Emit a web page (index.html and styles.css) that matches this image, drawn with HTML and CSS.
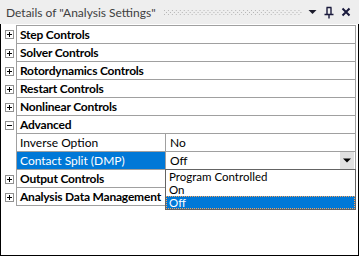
FILE: index.html
```html
<!DOCTYPE html>
<html>
<head>
<meta charset="utf-8">
<link rel="stylesheet" href="styles.css">
</head>
<body>
<div class="window">
  <div class="titlebar">
    <span class="title">Details of "Analysis Settings"</span>
    <svg class="grip" width="140" height="5" viewBox="0 0 140 5">
      <defs>
        <pattern id="dots" width="4" height="4" patternUnits="userSpaceOnUse">
          <rect x="0" y="0" width="1" height="1" fill="#b4b4b4"/>
          <rect x="2" y="2" width="1" height="1" fill="#b4b4b4"/>
        </pattern>
      </defs>
      <rect x="0" y="0" width="140" height="5" fill="url(#dots)"/>
    </svg>
    <span class="tbtns">
      <svg class="tbtn" width="9" height="6" viewBox="0 0 9 6"><polygon points="0.5,1 8.5,1 4.5,5" fill="#1c1c2c"/></svg>
      <svg class="tbtn" width="10" height="13" viewBox="0 0 10 13">
        <path d="M2.5 1.5 H7.5 M3 1.5 V8 M7 1.5 V8 M0.5 8.5 H9.5 M5 9 V12.5" stroke="#1a1a3c" stroke-width="1.4" fill="none"/>
      </svg>
      <svg class="tbtn" width="10" height="10" viewBox="0 0 10 10">
        <path d="M1.5 1.5 L8.5 8.5 M8.5 1.5 L1.5 8.5" stroke="#1a1a3c" stroke-width="2" fill="none"/>
      </svg>
    </span>
  </div>
  <div class="body">
    <div class="tree">
      <div class="row">
        <span class="exp"><svg width="9" height="9" viewBox="0 0 9 9"><rect x="0.5" y="0.5" width="8" height="8" fill="#fff" stroke="#909090"/><path d="M2 4.5 H7 M4.5 2 V7" stroke="#000"/></svg></span>
        <div class="cells cat">Step Controls</div>
      </div>
      <div class="row">
        <span class="exp"><svg width="9" height="9" viewBox="0 0 9 9"><rect x="0.5" y="0.5" width="8" height="8" fill="#fff" stroke="#909090"/><path d="M2 4.5 H7 M4.5 2 V7" stroke="#000"/></svg></span>
        <div class="cells cat">Solver Controls</div>
      </div>
      <div class="row">
        <span class="exp"><svg width="9" height="9" viewBox="0 0 9 9"><rect x="0.5" y="0.5" width="8" height="8" fill="#fff" stroke="#909090"/><path d="M2 4.5 H7 M4.5 2 V7" stroke="#000"/></svg></span>
        <div class="cells cat">Rotordynamics Controls</div>
      </div>
      <div class="row">
        <span class="exp"><svg width="9" height="9" viewBox="0 0 9 9"><rect x="0.5" y="0.5" width="8" height="8" fill="#fff" stroke="#909090"/><path d="M2 4.5 H7 M4.5 2 V7" stroke="#000"/></svg></span>
        <div class="cells cat">Restart Controls</div>
      </div>
      <div class="row">
        <span class="exp"><svg width="9" height="9" viewBox="0 0 9 9"><rect x="0.5" y="0.5" width="8" height="8" fill="#fff" stroke="#909090"/><path d="M2 4.5 H7 M4.5 2 V7" stroke="#000"/></svg></span>
        <div class="cells cat">Nonlinear Controls</div>
      </div>
      <div class="row">
        <span class="exp"><svg width="9" height="9" viewBox="0 0 9 9"><rect x="0.5" y="0.5" width="8" height="8" fill="#fff" stroke="#909090"/><path d="M2 4.5 H7" stroke="#000"/></svg></span>
        <div class="cells cat">Advanced</div>
      </div>
      <div class="row">
        <span class="exp"></span>
        <div class="cells prop">
          <span class="name">Inverse Option</span>
          <span class="value">No</span>
        </div>
      </div>
      <div class="row">
        <span class="exp"></span>
        <div class="cells prop">
          <span class="name selected">Contact Split (DMP)</span>
          <span class="value combo">
            <span class="combo-text">Off</span>
            <span class="combo-btn"><svg width="8" height="5" viewBox="0 0 8 5"><polygon points="0,0.5 8,0.5 4,4.5" fill="#000"/></svg></span>
            <span class="droplist">
              <span class="item">Program Controlled</span>
              <span class="item">On</span>
              <span class="item current">Off</span>
            </span>
          </span>
        </div>
      </div>
      <div class="row">
        <span class="exp"><svg width="9" height="9" viewBox="0 0 9 9"><rect x="0.5" y="0.5" width="8" height="8" fill="#fff" stroke="#909090"/><path d="M2 4.5 H7 M4.5 2 V7" stroke="#000"/></svg></span>
        <div class="cells cat">Output Controls</div>
      </div>
      <div class="row">
        <span class="exp"><svg width="9" height="9" viewBox="0 0 9 9"><rect x="0.5" y="0.5" width="8" height="8" fill="#fff" stroke="#909090"/><path d="M2 4.5 H7 M4.5 2 V7" stroke="#000"/></svg></span>
        <div class="cells cat">Analysis Data Management</div>
      </div>
    </div>
  </div>
</div>
</body>
</html>
```

FILE: styles.css
```css
* { box-sizing: border-box; }
html, body { margin: 0; padding: 0; }
body {
  width: 359px;
  height: 256px;
  background: #fff;
  font-family: "Lato", "Liberation Sans", sans-serif;
  font-size: 12px;
  color: #000;
  overflow: hidden;
}
.window {
  width: 359px;
  height: 256px;
  display: flex;
  flex-direction: column;
}
.titlebar {
  height: 24px;
  flex: none;
  background: #eeeeee;
  display: flex;
  align-items: center;
  padding-left: 6px;
  padding-right: 8px;
}
.title {
  color: #404040;
  font-size: 12px;
  white-space: nowrap;
}
.grip {
  flex: 1;
  margin: 0 6px 0 8px;
  height: 5px;
  display: block;
}
.tbtns {
  display: flex;
  align-items: center;
  gap: 7px;
}
.tbtn { display: block; }
.body {
  flex: 1;
  border: 1px solid #000;
  border-top: none;
  background: #fff;
  padding: 1px 2px 0 0;
}
.tree {
  display: flex;
  flex-direction: column;
}
.row {
  display: flex;
  height: 18px;
}
.row:first-child .cells { border-top: 1px solid #a0a0a0; height: 19px; }
.row:first-child { height: 19px; }
.exp {
  width: 15px;
  flex: none;
  display: flex;
  align-items: center;
  justify-content: center;
  padding-left: 1px;
}
.exp svg { display: block; }
.cells {
  flex: 1;
  border-left: 1px solid #a0a0a0;
  border-right: 1px solid #a0a0a0;
  border-bottom: 1px solid #a0a0a0;
  display: flex;
  align-items: center;
  white-space: nowrap;
}
.cat {
  font-weight: bold;
  letter-spacing: -0.2px;
  padding-left: 3px;
}
.prop { align-items: stretch; }
.name {
  width: 149px;
  flex: none;
  padding-left: 3px;
  display: flex;
  align-items: center;
  border-right: 1px solid #a0a0a0;
}
.name.selected {
  background: #0078d7;
  color: #fff;
}
.value {
  flex: 1;
  display: flex;
  align-items: center;
  padding-left: 4px;
}
.combo {
  position: relative;
  padding-right: 1px;
}
.combo-text { flex: 1; }
.combo-btn {
  width: 14px;
  align-self: stretch;
  background: #e1e1e1;
  display: flex;
  align-items: center;
  justify-content: center;
}
.combo-btn svg { display: block; }
.droplist {
  position: absolute;
  left: -1px;
  right: -1px;
  top: 17px;
  border: 1px solid #646464;
  background: #fff;
  display: flex;
  flex-direction: column;
  z-index: 5;
}
.item {
  height: 13px;
  line-height: 13px;
  font-size: 11.5px;
  padding-left: 3px;
  color: #000;
}
.item.current {
  background: #0078d7;
  color: #fff;
  outline: 1px dotted #f7a35c;
  outline-offset: -1px;
}
```
